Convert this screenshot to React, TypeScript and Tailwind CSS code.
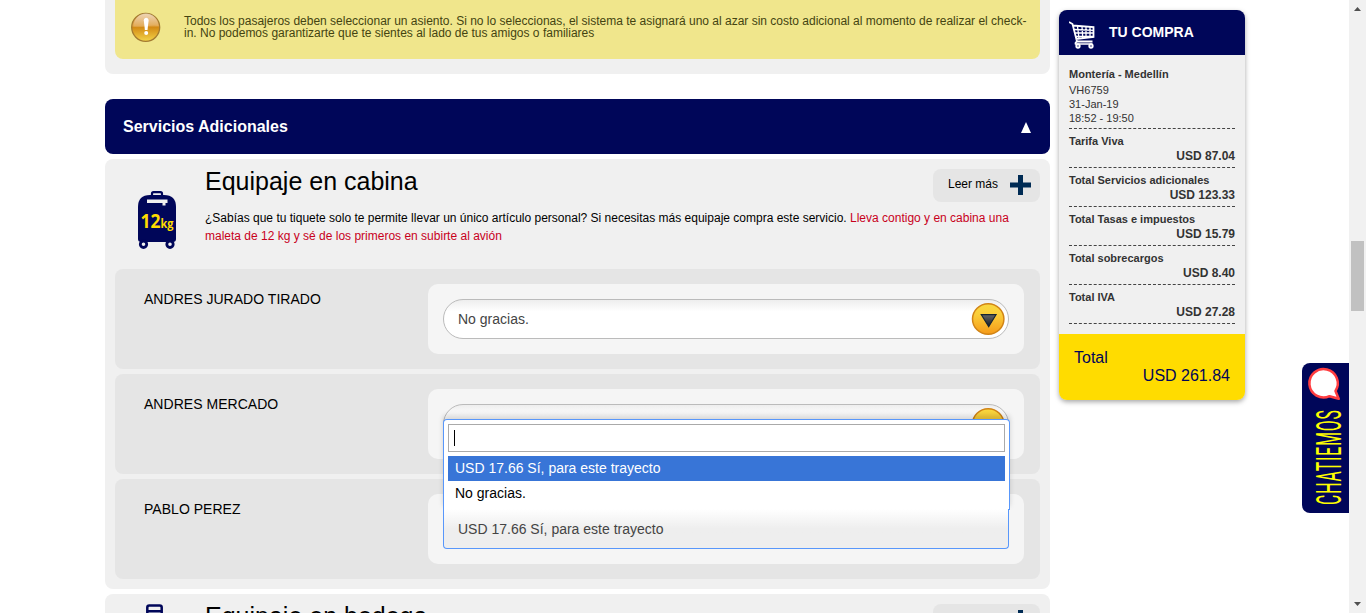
import React from "react";

const charges = [
  { label: "Tarifa Viva", amount: "USD 87.04" },
  { label: "Total Servicios adicionales", amount: "USD 123.33" },
  { label: "Total Tasas e impuestos", amount: "USD 15.79" },
  { label: "Total sobrecargos", amount: "USD 8.40" },
  { label: "Total IVA", amount: "USD 27.28" },
];

function WarningIcon() {
  return (
    <svg width="30" height="30" viewBox="0 0 30 30" className="shrink-0">
      <defs>
        <linearGradient id="warn" x1="0" y1="0" x2="0" y2="1">
          <stop offset="0" stopColor="#d99a4a" />
          <stop offset=".45" stopColor="#dfa041" />
          <stop offset=".5" stopColor="#d38a14" />
          <stop offset="1" stopColor="#f3d44a" />
        </linearGradient>
        <linearGradient id="gloss" x1="0" y1="0" x2="0" y2="1">
          <stop offset="0" stopColor="#fff" stopOpacity=".6" />
          <stop offset="1" stopColor="#fff" stopOpacity=".08" />
        </linearGradient>
      </defs>
      <circle cx="14.700" cy="15.300" r="14" fill="url(#warn)" stroke="#a37a30" strokeWidth="1.300" />
      <path d="M2.500 14a12.500 12.500 0 0 1 25 0c-7-2-14 2-25 1z" fill="url(#gloss)" />
      <path d="M12.800 8.500c0-3.600 4.800-3.600 4.800 0l-1.100 9.500h-2.600z" fill="#fff" />
      <circle cx="15.200" cy="21" r="2" fill="#fff" />
    </svg>
  );
}

function CabinBagIcon() {
  return (
    <svg width="38" height="58" viewBox="0 0 38 58" className="shrink-0">
      <path d="M14 5V2.800Q14 1.200 15.500 1.200h7q1.500 0 1.500 1.600V5" fill="none" stroke="#000659" strokeWidth="2.200" />
      <path d="M0 16Q0 4 12 4h14q12 0 12 12v32q0 3-3 3H3q-3 0-3-3z" fill="#000659" />
      <path d="M9 8.500h20.500v3.500h-2v2.500h-3V12H9z" fill="#f0f0f0" />
      <circle cx="5.500" cy="53.300" r="3.200" fill="#f0f0f0" stroke="#000659" strokeWidth="2.800" />
      <circle cx="32" cy="53.300" r="3.200" fill="#f0f0f0" stroke="#000659" strokeWidth="2.800" />
      <text x="2.500" y="37" fill="#ffdc00" fontFamily="Open Sans" fontWeight="700" fontSize="20" textLength="20" lengthAdjust="spacingAndGlyphs">
        12
        <tspan fontSize="1"> </tspan>
      </text>
      <text x="22.500" y="37" fill="#ffdc00" fontFamily="Open Sans" fontWeight="700" fontSize="11.500" textLength="13" lengthAdjust="spacingAndGlyphs">
        kg
      </text>
    </svg>
  );
}

function HoldBagIcon() {
  return (
    <svg width="38" height="58" viewBox="0 0 38 58" className="shrink-0">
      <path d="M9.300 20V3.500q0-2 2-2h10.400q2 0 2 2V20M9 7.300h15" fill="none" stroke="#000659" strokeWidth="2.500" />
    </svg>
  );
}

function CartIcon() {
  return (
    <svg width="26" height="28" viewBox="0 0 26 28" fill="none" stroke="#fff">
      <path d="M0 1l3.500 2L8 20.500h15.500M3.500 4.500L24.500 6v10L6.500 18" strokeWidth="1.800" />
      <path d="M4.500 8.500l20 .8M5.500 12l19 0M6 15.500h18M8.500 5l1.500 12.500M13 5.500l.8 12M17 5.500v11.500M21 6v11" strokeWidth="1.300" />
      <path d="M8 20.500q-2 1-1.500 2.500h17" strokeWidth="1.600" />
      <circle cx="9" cy="25" r="1.700" strokeWidth="1.900" />
      <circle cx="22" cy="25" r="1.700" strokeWidth="1.900" />
    </svg>
  );
}

function ArrowButton() {
  return (
    <svg width="34" height="34" viewBox="0 0 34 34" className="shrink-0">
      <defs>
        <linearGradient id="amber" x1="0" y1="0" x2="0" y2="1">
          <stop offset="0" stopColor="#f9d83e" />
          <stop offset=".35" stopColor="#fbce3a" />
          <stop offset="1" stopColor="#f59a18" />
        </linearGradient>
        <linearGradient id="ink" x1="0" y1="0" x2="0" y2="1">
          <stop offset="0" stopColor="#666" />
          <stop offset="1" stopColor="#111a28" />
        </linearGradient>
      </defs>
      <ellipse cx="17.200" cy="17" rx="15.700" ry="15.300" fill="url(#amber)" stroke="#d18416" strokeWidth="1.500" />
      <path d="M10.300 12.700h14.700L17.700 24.600z" fill="url(#ink)" stroke="#172532" strokeWidth="1.200" />
    </svg>
  );
}

function ReadMore() {
  return (
    <div className="flex h-[33px] w-[107px] shrink-0 items-center rounded-lg bg-[#e5e5e5] pb-[2px] pl-[15px]">
      <span className="w-[62px] pb-[2px] text-[12px] text-black">Leer más</span>
      <svg width="21" height="20" viewBox="0 0 21 20">
        <path d="M8 0h5v7.500h8v5h-8V20H8v-7.500H0v-5h8z" fill="#002b54" />
      </svg>
    </div>
  );
}

function PassengerRow({ name, children }: { name: string; children: React.ReactNode }) {
  return (
    <div className="flex h-[100px] rounded-lg bg-[#e5e5e5] pt-[15px] pl-[29px]">
      <div className="w-[284px] pt-[5px] text-[14px] leading-5 tracking-[0.03px] text-black">{name}</div>
      <div className="h-[70px] w-[596px] rounded-[10px] bg-[#f5f5f5] p-[15px]">{children}</div>
    </div>
  );
}

function ClosedSelect({ value }: { value?: string }) {
  return (
    <div className="flex h-10 w-[566px] items-center justify-between rounded-[20px] border border-[#bbb] bg-linear-to-b from-[#eee] to-white to-30% pr-[3px] pl-[14px] text-[14px] text-[#444]">
      <span>{value}</span>
      <ArrowButton />
    </div>
  );
}

function SearchMenu() {
  return (
    <div className="absolute top-[15px] left-0 z-10 h-[91px] w-[567px] rounded-t border border-b-0 border-[#5897fb] bg-white px-1 pt-1 text-[14px] shadow-[0_-4px_5px_rgba(0,0,0,0.15)]">
      <div className="flex h-7 w-[557px] items-center border border-[#aaa] pl-[5px]">
        <span className="h-4 w-px bg-black" />
      </div>
      <div className="mt-1 h-[25px] w-[557px] bg-[#3875d7] pl-[7px] leading-[25px] text-white">USD 17.66 Sí, para este trayecto</div>
      <div className="h-[25px] pl-[7px] leading-[25px] text-black">No gracias.</div>
    </div>
  );
}

function Summary() {
  return (
    <aside className="mt-[10px] ml-[9px] h-[390px] w-[186px] shrink-0 overflow-hidden rounded-lg bg-[#f0f0f0] text-[#333] shadow-[0_2px_5px_rgba(0,0,0,0.35)]">
      <div className="flex h-[45px] items-center bg-[#000659] pl-[10px]">
        <div className="w-10 pt-[4px]"><CartIcon /></div>
        <span className="text-[14px] font-bold text-white">TU COMPRA</span>
      </div>
      <div className="h-[279px] px-[10px] pt-3 text-[11px]">
        <div className="h-[62px] border-b border-dashed border-[#444] leading-[14px]">
          <div className="mb-[2px] font-bold">Montería - Medellín</div>
          <div>VH6759</div>
          <div>31-Jan-19</div>
          <div>18:52 - 19:50</div>
        </div>
        {charges.map((c) => (
          <div key={c.label} className="h-[39px] border-b border-dashed border-[#444] pt-[5px] font-bold">
            <div className="whitespace-nowrap leading-[15px]">{c.label}</div>
            <div className="text-right text-[12px] leading-[14px]">{c.amount}</div>
          </div>
        ))}
      </div>
      <div className="h-[66px] bg-[#ffdc00] px-[15px] pt-[15px] text-[16px] leading-[18px] text-[#000659]">
        <div>Total</div>
        <div className="text-right">USD 261.84</div>
      </div>
    </aside>
  );
}

export default function App() {
  return (
    <div className="relative flex h-[613px] w-[1366px] overflow-hidden bg-white font-['Liberation_Sans',Arial,sans-serif]">
      <main className="ml-[105px] w-[945px] shrink-0">
        <div className="h-[74px] rounded-b-lg bg-[#f0f0f0] px-[10px]">
          <div className="flex h-[59px] rounded-b-lg bg-[#f0e68c] pt-3 pl-4">
            <WarningIcon />
            <div className="ml-[23px] pt-[3px] text-[12px] leading-[12px] whitespace-nowrap text-[#444411]">
              Todos los pasajeros deben seleccionar un asiento. Si no lo seleccionas, el sistema te asignará uno al azar sin costo adicional al momento de realizar el check-
              <br />
              in. No podemos garantizarte que te sientes al lado de tus amigos o familiares
            </div>
          </div>
        </div>

        <div className="mt-[25px] flex h-[55px] items-center justify-between rounded-lg bg-[#000659] pr-[19px] pl-[18px]">
          <h2 className="text-[16px] font-bold text-white">Servicios Adicionales</h2>
          <svg width="10" height="11" viewBox="0 0 10 11" className="mt-[2px]"><path d="M5 0l5 11H0z" fill="#fff" /></svg>
        </div>

        <section className="mt-[5px] h-[430px] rounded-lg bg-[#f0f0f0] px-[10px]">
          <div className="flex h-[110px]">
            <div className="w-[90px] pt-[32px] pl-[23px]"><CabinBagIcon /></div>
            <div className="flex-1">
              <div className="flex justify-between">
                <h3 className="pt-[7px] text-[25px] leading-[30px] text-black">Equipaje en cabina</h3>
                <div className="pt-[10px]"><ReadMore /></div>
              </div>
              <p className="mt-[7px] text-[12px] leading-[18px] whitespace-nowrap text-black">
                ¿Sabías que tu tiquete solo te permite llevar un único artículo personal? Si necesitas más equipaje compra este servicio. <span className="text-[#c8001c]">Lleva contigo y en cabina una<br />maleta de 12 kg y sé de los primeros en subirte al avión</span>
              </p>
            </div>
          </div>
          <div className="flex flex-col gap-[5px]">
            <PassengerRow name="ANDRES JURADO TIRADO"><ClosedSelect value="No gracias." /></PassengerRow>
            <PassengerRow name="ANDRES MERCADO">
              <div className="relative">
                <ClosedSelect />
                <SearchMenu />
              </div>
            </PassengerRow>
            <PassengerRow name="PABLO PEREZ">
              <div className="relative z-20 h-10 w-[566px] rounded-b border border-t-0 border-[#5897fb] bg-linear-to-b from-white to-[#eee] to-50% pl-[14px] text-[14px] leading-10 text-[#444]">
                USD 17.66 Sí, para este trayecto
              </div>
            </PassengerRow>
          </div>
        </section>

        <section className="mt-[5px] flex h-[110px] rounded-lg bg-[#f0f0f0] px-[10px]">
          <div className="w-[90px] pt-[10px] pl-[23px]"><HoldBagIcon /></div>
          <div className="flex flex-1 justify-between">
            <h3 className="pt-[7px] text-[25px] leading-[30px] text-black">Equipaje en bodega</h3>
            <div className="pt-[10px]"><ReadMore /></div>
          </div>
        </section>
      </main>

      <Summary />

      <div className="mt-[363px] ml-[57px] h-[150px] w-[47px] shrink-0 rounded-l-lg bg-[#000659]">
        <svg width="47" height="150" viewBox="0 0 47 150">
          <path d="M27.500 33.200L36.700 35.800 33.500 28A14.200 14.200 0 1 0 27.500 33.200z" fill="#fff" stroke="#ff3d40" strokeWidth="2.500" strokeLinejoin="round" />
          <text transform="translate(38.500 142) rotate(-90) scale(.45 1)" textLength="211" lengthAdjust="spacing" fill="#ffff00" fontFamily="Roboto" fontWeight="400" fontSize="35">
            CHATIEMOS
          </text>
        </svg>
      </div>

      <div className="flex h-full w-[17px] shrink-0 flex-col items-center bg-[#f1f1f1]">
        <svg width="7" height="4" viewBox="0 0 7 4" className="mt-[7px]"><path d="M3.500 0L7 4H0z" fill="#505050" /></svg>
        <div className="mt-[230px] h-[70px] w-[13px] bg-[#c1c1c1]" />
        <svg width="7" height="4" viewBox="0 0 7 4" className="mt-auto mb-[7px]"><path d="M0 0h7L3.500 4z" fill="#505050" /></svg>
      </div>
    </div>
  );
}
